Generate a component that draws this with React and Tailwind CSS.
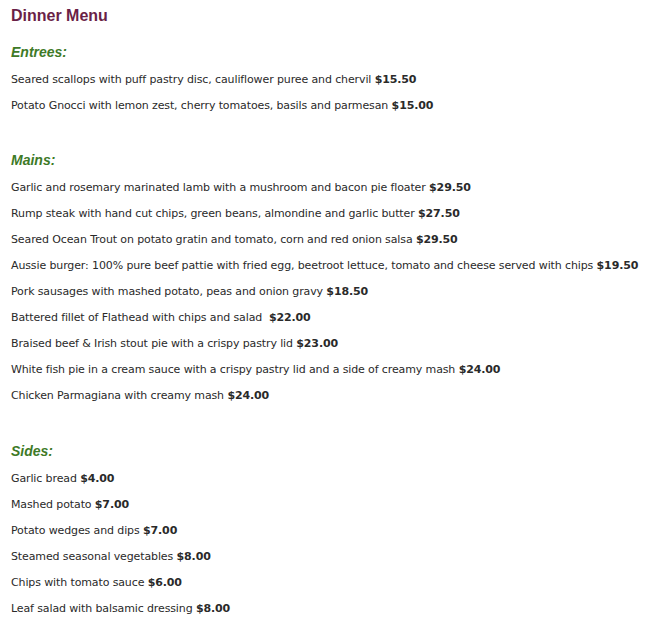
import React from "react";

const sections = [
  {
    title: "Entrees:",
    gap: "",
    items: [
      ["Seared scallops with puff pastry disc, cauliflower puree and chervil", "$15.50"],
      ["Potato Gnocci with lemon zest, cherry tomatoes, basils and parmesan", "$15.00"],
    ],
  },
  {
    title: "Mains:",
    gap: "mt-[39px]",
    items: [
      ["Garlic and rosemary marinated lamb with a mushroom and bacon pie floater", "$29.50"],
      ["Rump steak with hand cut chips, green beans, almondine and garlic butter", "$27.50"],
      ["Seared Ocean Trout on potato gratin and tomato, corn and red onion salsa", "$29.50"],
      ["Aussie burger: 100% pure beef pattie with fried egg, beetroot lettuce, tomato and cheese served with chips", "$19.50"],
      ["Pork sausages with mashed potato, peas and onion gravy", "$18.50"],
      ["Battered fillet of Flathead with chips and salad\u00a0", "$22.00"],
      ["Braised beef & Irish stout pie with a crispy pastry lid", "$23.00"],
      ["White fish pie in a cream sauce with a crispy pastry lid and a side of creamy mash", "$24.00"],
      ["Chicken Parmagiana with creamy mash", "$24.00"],
    ],
  },
  {
    title: "Sides:",
    gap: "mt-[40px]",
    items: [
      ["Garlic bread", "$4.00"],
      ["Mashed potato", "$7.00"],
      ["Potato wedges and dips", "$7.00"],
      ["Steamed seasonal vegetables", "$8.00"],
      ["Chips with tomato sauce", "$6.00"],
      ["Leaf salad with balsamic dressing", "$8.00"],
    ],
  },
];

export default function App() {
  return (
    <div className="w-[650px] h-[624px] bg-white px-[11px] pt-[7px] overflow-hidden">
      <h1 className="text-[16px] leading-[18px] font-bold text-[#6a1f47] font-['Liberation_Sans',Arial,sans-serif]">
        Dinner Menu
      </h1>
      <div className="flex flex-col mt-[19px]">
        {sections.map((s) => (
          <div key={s.title} className={`flex flex-col gap-[12px] ${s.gap}`}>
            <h2 className="text-[14px] leading-[16px] font-bold italic text-[#3e7a27] font-['Liberation_Sans',Arial,sans-serif] mb-[1px]">
              {s.title}
            </h2>
            {s.items.map(([name, price]) => (
              <p
                key={name}
                className="text-[11px] leading-[14px] tracking-[-0.12px] text-[#2a2a2a] whitespace-nowrap font-['DejaVu_Sans',Verdana,sans-serif]"
              >
                {name} <b className="font-bold">{price}</b>
              </p>
            ))}
          </div>
        ))}
      </div>
    </div>
  );
}
